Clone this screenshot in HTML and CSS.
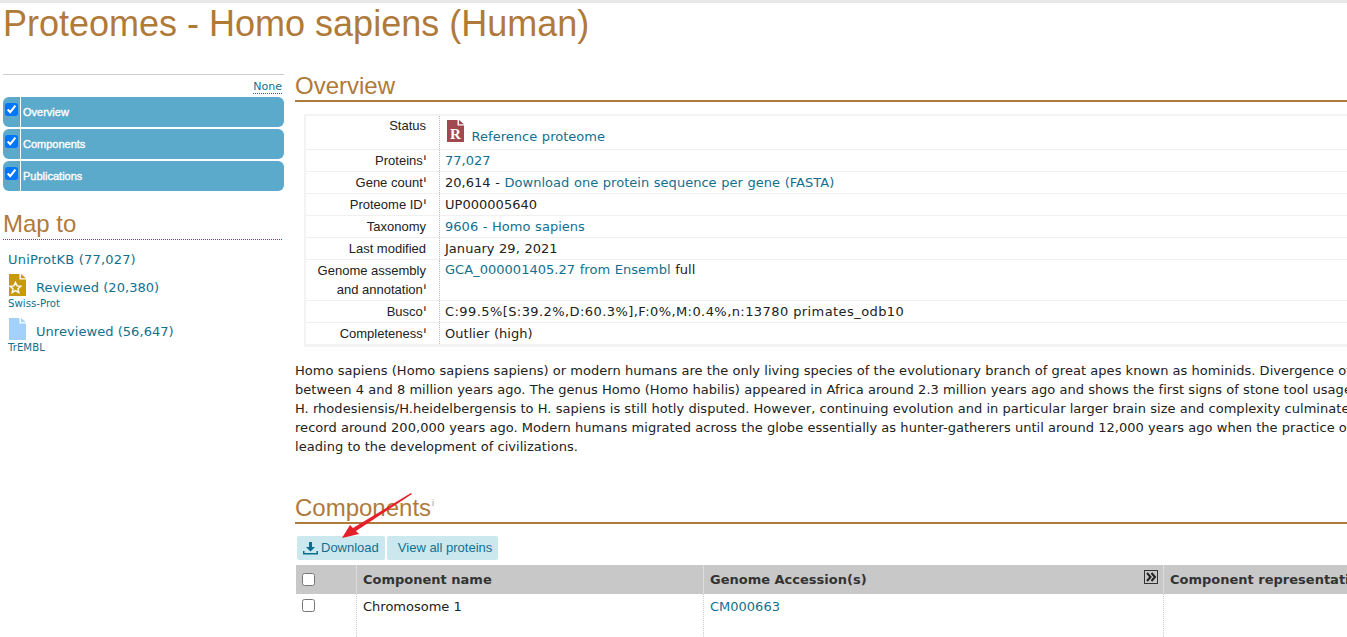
FILE: index.html
```html
<!DOCTYPE html>
<html lang="en">
<head>
<meta charset="utf-8">
<title>Proteomes - Homo sapiens (Human)</title>
<link rel="stylesheet" href="styles.css">
</head>
<body>
<div class="topline"></div>
<h1 class="title">Proteomes - Homo sapiens (Human)</h1>
<div class="page">
  <aside class="side">
    <div class="none-row"><a class="none" href="#">None</a></div>
    <ul class="nav">
      <li class="nav-item"><span class="nav-check"><input type="checkbox" checked></span><span class="nav-label">Overview</span></li>
      <li class="nav-item"><span class="nav-check"><input type="checkbox" checked></span><span class="nav-label">Components</span></li>
      <li class="nav-item"><span class="nav-check"><input type="checkbox" checked></span><span class="nav-label">Publications</span></li>
    </ul>
    <h2 class="map-title">Map to</h2>
    <div class="map">
      <a class="map-main" href="#">UniProtKB (77,027)</a>
      <div class="map-row">
        <svg class="doc" width="17" height="22" viewBox="0 0 17 22"><path fill="#c79a0c" d="M0 0h10.500v5.500H17V22H0z"/><path fill="#c79a0c" d="M12 0l5 4.200h-5z"/><path fill="#c79a0c" stroke="#fff" stroke-width="1.400" d="M6.500 8.500l1.600 3.400 3.700.4-2.800 2.500.8 3.700-3.300-1.900-3.300 1.900.8-3.700-2.800-2.500 3.700-.4z"/></svg>
        <a href="#">Reviewed (20,380)</a>
      </div>
      <div class="map-sub">Swiss-Prot</div>
      <div class="map-row">
        <svg class="doc" width="17" height="22" viewBox="0 0 17 22"><path fill="#a3d1fb" d="M0 0h10.500v5.500H17V22H0z"/><path fill="#a3d1fb" d="M12 0l5 4.200h-5z"/></svg>
        <a href="#">Unreviewed (56,647)</a>
      </div>
      <div class="map-sub">TrEMBL</div>
    </div>
  </aside>
  <main class="content">
    <h2 class="section-title">Overview</h2>
    <table class="info">
      <tr class="status-row"><th>Status</th><td>
        <svg class="ref-icon" width="17" height="22" viewBox="0 0 17 22"><path fill="#a04a50" d="M0 0h10.500v5.500H17V22H0z"/><path fill="#a04a50" d="M12 0l5 4.200h-5z"/><text x="8.500" y="19" text-anchor="middle" class="ref-r">R</text></svg>
        <a href="#">Reference proteome</a></td></tr>
      <tr><th>Proteins<sup>i</sup></th><td><a href="#">77,027</a></td></tr>
      <tr><th>Gene count<sup>i</sup></th><td>20,614 - <a href="#">Download one protein sequence per gene (FASTA)</a></td></tr>
      <tr><th>Proteome ID<sup>i</sup></th><td>UP000005640</td></tr>
      <tr><th>Taxonomy</th><td><a href="#">9606 - Homo sapiens</a></td></tr>
      <tr><th>Last modified</th><td>January 29, 2021</td></tr>
      <tr class="tall-row"><th>Genome assembly<br>and annotation<sup>i</sup></th><td><a href="#">GCA_000001405.27 from Ensembl</a> full</td></tr>
      <tr><th>Busco<sup>i</sup></th><td class="busco">C:99.5%[S:39.2%,D:60.3%],F:0%,M:0.4%,n:13780 primates_odb10</td></tr>
      <tr><th>Completeness<sup>i</sup></th><td>Outlier (high)</td></tr>
    </table>
    <p class="desc">Homo sapiens (Homo sapiens sapiens) or modern humans are the only living species of the evolutionary branch of great apes known as hominids. Divergence of<br>
    between 4 and 8 million years ago. The genus Homo (Homo habilis) appeared in Africa around 2.3 million years ago and shows the first signs of stone tool usage<br>
    H. rhodesiensis/H.heidelbergensis to H. sapiens is still hotly disputed. However, continuing evolution and in particular larger brain size and complexity culminated<br>
    record around 200,000 years ago. Modern humans migrated across the globe essentially as hunter-gatherers until around 12,000 years ago when the practice of<br>
    leading to the development of civilizations.</p>
    <h2 class="section-title comp-title">Components<sup>i</sup></h2>
    <div class="buttons">
      <a class="btn" href="#"><svg width="15" height="13" viewBox="0 0 15 13"><path fill="#0a6f8f" d="M6 0h3v5h3L7.500 9.500 3 5h3zM0 9h1.500v2h12V9H15v3.500H0z"/></svg>Download</a>
      <a class="btn btn-view" href="#">View all proteins</a>
    </div>
    <table class="grid">
      <tr>
        <th class="c-check"><input type="checkbox"></th>
        <th class="c-name">Component name</th>
        <th class="c-acc">Genome Accession(s)<span class="expand">
          <svg width="14" height="14" viewBox="0 0 14 14"><rect x=".5" y=".5" width="13" height="13" fill="none" stroke="#333"/><path fill="none" stroke="#222" stroke-width="2" d="M3 3l3.500 4L3 11M7.500 3l3.500 4-3.500 4"/></svg></span></th>
        <th class="c-rep">Component representation in the proteome</th>
      </tr>
      <tr class="data-row">
        <td class="c-check"><input type="checkbox"></td>
        <td>Chromosome 1</td>
        <td><a href="#">CM000663</a></td>
        <td></td>
      </tr>
    </table>
  </main>
</div>
<svg class="arrow" width="130" height="60" viewBox="0 0 130 60"><path fill="#e5202a" d="M52 48L60 35 69 44ZM121 3L122 4 66 41 63 38Z"/></svg>
</body>
</html>
```

FILE: styles.css
```css
html, body { margin: 0; padding: 0; }
body {
  width: 1347px;
  height: 637px;
  overflow: hidden;
  position: relative;
  background: #fff;
  color: #222;
  font-family: "DejaVu Sans", Verdana, sans-serif;
  font-size: 13px;
}
a { color: #12708f; text-decoration: none; }
.topline { height: 3px; background: #e8e8e8; }
.title {
  margin: 0;
  padding: 0 0 0 3px;
  height: 71px;
  box-sizing: border-box;
  font: 400 36px/42px "Liberation Sans", Arial, sans-serif;
  color: #b07a3a;
}
.page { display: flex; width: 1700px; }
.side { width: 281px; margin-left: 3px; flex: none; }
.none-row {
  border-top: 1px solid #ccc;
  height: 23px;
  box-sizing: border-box;
  text-align: right;
  padding-top: 3px;
}
.none {
  font-size: 11px;
  line-height: 13px;
  border-bottom: 1px dotted #12708f;
  margin-right: 2px;
  display: inline-block;
}
.nav { list-style: none; margin: 0; padding: 0; }
.nav-item {
  display: flex;
  height: 30px;
  margin-bottom: 2px;
  background: #5ba9cb;
  border-radius: 6px;
  color: #fff;
  overflow: hidden;
}
.nav-check {
  width: 17px;
  flex: none;
  border-right: 1px solid #fff;
  padding-top: 6px;
  box-sizing: content-box;
}
.nav-check input { margin: 0 0 0 2px; width: 13px; height: 13px; display: block; }
.nav-label {
  padding-left: 2px;
  font: 400 11px/30px "Liberation Sans", Arial, sans-serif;
  -webkit-text-stroke: 0.35px #fff;
}
.map-title {
  margin: 17px 0 0;
  font: 400 24px/31px "Liberation Sans", Arial, sans-serif;
  color: #b07a3a;
  border-bottom: 1px dotted #12708f;
  width: 279px;
  height: 31px;
}
.map { padding: 10px 0 0 5px; font-size: 13px; line-height: 20px; }
.map-main { display: block; letter-spacing: 0.2px; }
.map-row { display: flex; align-items: flex-end; height: 24px; margin-left: 1px; margin-top: 2px; }
.map-row .doc { flex: none; margin-right: 10px; }
.map-row a { line-height: 17px; letter-spacing: 0.05px; }
.map-sub { font-size: 10.2px; line-height: 14px; color: #12708f; margin-top: 1px; margin-bottom: 5px; }
.content { margin-left: 11px; flex: none; width: 1400px; }
.section-title {
  margin: 0;
  height: 26px;
  box-sizing: content-box;
  font: 400 24px/24px "Liberation Sans", Arial, sans-serif;
  color: #b07a3a;
  border-bottom: 2px solid #b07a3a;
}
.section-title sup { font-size: 9px; color: #999; vertical-align: 10px; line-height: 0; margin-left: 1px; }
.info {
  border-collapse: collapse;
  margin: 12px 0 0 9px;
  width: 1200px;
  border: 2px solid #f3f3f3;
  border-bottom-width: 3px;
}
.info th, .info td { border-bottom: 1px solid #f0f0f0; padding: 0; height: 21px; vertical-align: middle; }
.info th {
  width: 120px;
  padding-right: 13px;
  text-align: right;
  font: 400 13px/19px "Liberation Sans", Arial, sans-serif;
  color: #222;
  border-right: 1px dotted #bbb;
}
.info td { padding-left: 5px; line-height: 19px; word-spacing: 0.4px; letter-spacing: 0.03px; }
.info sup { font-size: 8px; line-height: 0; vertical-align: 5px; margin-left: 1px; font-weight: 700; }
.status-row th { vertical-align: top; padding-top: 0; }
.status-row td { height: 29px; padding-top: 4px; }
.ref-icon { vertical-align: -5px; margin-right: 3px; margin-left: 2px; position: relative; top: -4px; }
.ref-r { font: 700 15px "Liberation Serif", serif; fill: #fff; }
.tall-row th { height: 40px; }
.tall-row td { vertical-align: top; }
.info .busco { letter-spacing: 0.42px; word-spacing: 0; }
.desc { margin: 14px 0 0; line-height: 19px; white-space: nowrap; letter-spacing: 0.04px; }
.comp-title { margin-top: 40px; }
.buttons { display: flex; gap: 2px; margin: 12px 0 0 2px; }
.btn {
  display: flex;
  align-items: center;
  gap: 3px;
  height: 24px;
  padding: 0 6px;
  background: #cce8ef;
  border-radius: 2px;
  font: 400 13px/24px "Liberation Sans", Arial, sans-serif;
  color: #12708f;
}
.btn-view { padding: 0 6px 0 11px; }
.grid {
  border-collapse: collapse;
  table-layout: fixed;
  width: 1200px;
  margin: 2px 0 0;
  border-top: 1px dotted #12708f;
  border-spacing: 0;
}
.grid th {
  background: #c8c8c8;
  height: 29px;
  padding: 0 6px;
  text-align: left;
  font-size: 13px;
  color: #333;
  border-right: 1px solid #ddd;
  border-top: 3px solid #fff;
  position: relative;
  white-space: nowrap;
}
.grid th:first-child, .grid td:first-child { padding-left: 6px; }
.grid td {
  height: 38px;
  padding: 5px 6px 0;
  vertical-align: top;
  border-right: 1px dotted #ccc;
}
.grid input { margin: 0; width: 13px; height: 13px; display: block; }
.c-check { width: 48px; }
.grid th.c-check { background-clip: padding-box; border-left: 1px solid #fff; }
.grid td.c-check { border-left: 1px solid #fff; }
.c-name { width: 334px; }
.c-acc { width: 447px; }
.expand { position: absolute; right: 5px; top: 5px; }
.arrow { position: absolute; left: 290px; top: 490px; pointer-events: none; }
```
